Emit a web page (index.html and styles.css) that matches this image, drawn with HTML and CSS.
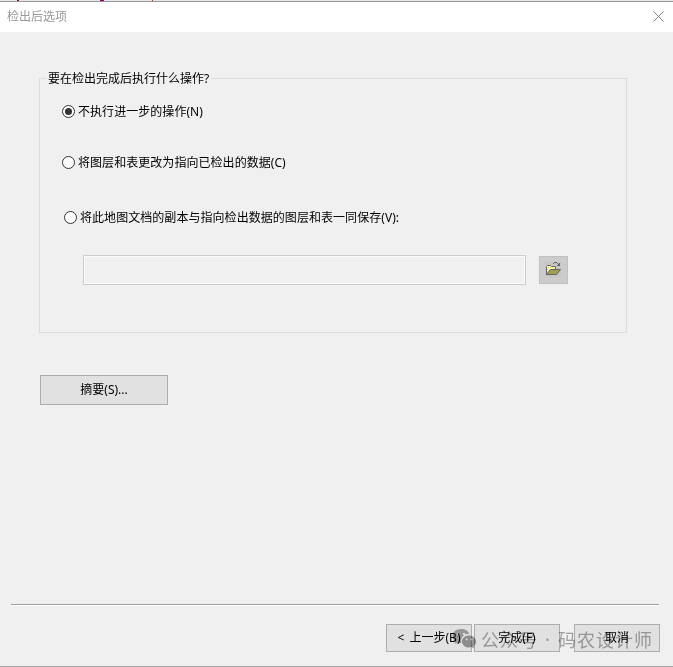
FILE: index.html
```html
<!DOCTYPE html>
<html lang="zh-CN">
<head>
<meta charset="utf-8">
<title>检出后选项</title>
<link rel="stylesheet" href="styles.css">
</head>
<body>
<div class="dialog">
  <div class="backdrop"><i class="speck s1"></i><i class="speck s2"></i><i class="speck s3"></i></div>
  <header class="titlebar">
    <span>检出后选项</span>
    <svg class="close" width="11" height="11" viewBox="0 0 11 11"><path d="M.5 .5l10 10M10.5 .5l-10 10" stroke="#858585" fill="none"/></svg>
  </header>
  <main class="content">
    <section class="group">
      <h2 class="legend">要在检出完成后执行什么操作?</h2>
      <label class="option first"><span class="radio checked"></span>不执行进一步的操作(N)</label>
      <label class="option second"><span class="radio"></span>将图层和表更改为指向已检出的数据(C)</label>
      <label class="option third"><span class="radio"></span>将此地图文档的副本与指向检出数据的图层和表一同保存(V):</label>
      <div class="path-row">
        <div class="path"></div>
        <div class="browse">
          <svg width="16" height="15" viewBox="0 0 16 15">
            <path d="M0 0h16v15H0z" fill="#c6c6c6"/>
            <path d="M1.500 12.500V4.500l1-1h3l1 1h4v3" fill="#f5f4ba" stroke="#666"/>
            <path d="M3 5h1v1H3zM5 5h1v1H5zM2 7h1v1H2zM4 7h1v1H4zM6 7h1v1H6zM8 6h1v1H8zM3 9h1v1H3z" fill="#e8e337"/>
            <path d="M1.500 12.500l4-5h10l-4 5z" fill="#a2a050" stroke="#666"/>
            <path d="M8 1.500h1M9 .5h3M12 1.500h1M13 2.500h1M14.500 1v3M12 3.500h3" fill="none" stroke="#666"/>
          </svg>
        </div>
      </div>
    </section>
    <div class="button summary">摘要(S)...</div>
  </main>
  <footer class="footer">
    <div class="button back">&lt; 上一步(B)</div>
    <div class="button finish">完成(F)</div>
    <div class="button cancel">取消</div>
    <div class="watermark">
      <svg width="25" height="22" viewBox="0 0 25 22">
        <path fill="#aaa" fill-rule="evenodd" d="M9 1C4 1 .5 4.200 .5 8c0 2.200 1.200 4.200 3 5.500L2.700 16l3-1.500c1.200.4 2.300.5 3.800.5A7 7 0 0 1 17.500 6C16.500 3 13.200 1 9 1zM6 4.800a1.100 1.100 0 1 1 0 2.200 1.100 1.100 0 0 1 0-2.200zm6 0a1.100 1.100 0 1 1 0 2.200 1.100 1.100 0 0 1 0-2.200z"/>
        <path fill="#9f9f9f" fill-rule="evenodd" d="M17 7.500c-4 0-7 2.700-7 6s3 6 7 6c1 0 2-.2 2.800-.4l2.500 1.300-.6-2.200c1.500-1.200 2.400-2.800 2.400-4.700 0-3.300-3.100-6-7.100-6zM14.700 10.500a.9.9 0 1 1 0 1.800.9.9 0 0 1 0-1.800zm4.700 0a.9.9 0 1 1 0 1.800.9.9 0 0 1 0-1.800z"/>
      </svg>
      <span class="source">公众号</span><span class="dot">·</span><span>码农设计师</span>
    </div>
  </footer>
</div>
</body>
</html>
```
FILE: styles.css
```css
* { box-sizing: border-box; }

body {
  margin: 0;
  font: 12px/16px "Noto Sans", "Noto Sans CJK SC", sans-serif;
  color: #000;
  background: #f0f0f0;
}

.dialog {
  display: flex;
  flex-direction: column;
  width: 673px;
  height: 667px;
  background: #f0f0f0;
  border-bottom: 1px solid #a5a5a5;
  overflow: hidden;
}

.backdrop {
  display: flex;
  height: 2px;
  flex: none;
  background: #e5e5e5;
  border-bottom: 1px solid #999;
}

.speck { height: 1px; background: #850062; }
.s1 { width: 2px; margin-left: 17px; }
.s2 { width: 4px; margin-left: 81px; }
.s3 { width: 1px; margin-left: 48px; background: #a44b28; }

.titlebar {
  display: flex;
  flex: none;
  justify-content: space-between;
  align-items: center;
  height: 30px;
  padding: 0 10px 0 7px;
  background: #fff;
  color: #999;
}

.close { margin: 0 -1px 2px 0; }

.content { flex: 1; padding: 46px 46px 0 39px; }

.group {
  height: 255px;
  border: 1px solid #dcdcdc;
}

.legend {
  width: max-content;
  margin: -8px 0 0 6px;
  padding: 0 2px;
  background: #f0f0f0;
  font-size: 12px;
  font-weight: 400;
  line-height: 16px;
}

.option {
  display: flex;
  align-items: center;
  gap: 3px;
  height: 16px;
  margin-left: 22px;
  white-space: nowrap;
  letter-spacing: .05px;
}

.first { margin-top: 17px; }
.second { margin-top: 35px; }
.third { margin: 39px 0 0 24px; }

.radio {
  display: flex;
  align-items: center;
  justify-content: center;
  width: 13px;
  height: 13px;
  margin-bottom: 2px;
  border: 1px solid #333;
  border-radius: 50%;
  background: #fff;
}

.checked::after {
  content: "";
  width: 7px;
  height: 7px;
  border-radius: 50%;
  background: #333;
}

.path-row {
  display: flex;
  align-items: center;
  gap: 13px;
  margin: 29px 0 0 43px;
}

.path {
  width: 443px;
  height: 30px;
  border: 1px solid #ccc;
  box-shadow: inset 0 0 0 1px #fafafa;
}

.browse {
  display: flex;
  align-items: center;
  justify-content: center;
  width: 29px;
  height: 28px;
  padding: 0 1px 1px 0;
  background: #ccc;
  border: 1px solid #c0c0c0;
}

.button {
  display: flex;
  align-items: center;
  justify-content: center;
  width: 86px;
  height: 28px;
  border: 1px solid #adadad;
  background: #e1e1e1;
  white-space: nowrap;
}

.summary {
  width: 128px;
  height: 30px;
  margin: 42px 0 0 1px;
}

.footer {
  position: relative;
  display: flex;
  flex: none;
  justify-content: flex-end;
  height: 62px;
  margin: 0 14px 0 11px;
  padding-top: 19px;
  border-top: 1px solid #a0a0a0;
  box-shadow: inset 0 1px #fff;
}

.back { word-spacing: 2px; }
.finish { margin-left: 2px; }
.cancel { margin: 0 -1px 0 14px; }

.watermark {
  position: absolute;
  left: 441px;
  top: 21px;
  display: flex;
  align-items: center;
  height: 26px;
  color: #aaa;
  font: 18px/26px "Noto Sans CJK SC", sans-serif;
  letter-spacing: 1px;
  white-space: nowrap;
  mix-blend-mode: multiply;
}

.source { margin-left: 4px; }
.dot { width: 20px; text-align: center; font-family: "Noto Sans", sans-serif; }
```
